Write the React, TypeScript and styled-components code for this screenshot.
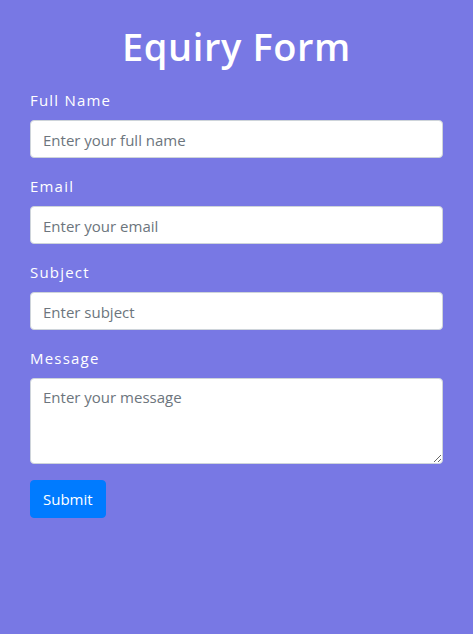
import React from 'react';
import styled, { createGlobalStyle } from 'styled-components';

const GlobalStyle = createGlobalStyle`
  html, body {
    margin: 0;
    padding: 0;
    background: #7878e4;
  }
  body {
    font-family: 'Open Sans', 'Noto Sans', sans-serif;
  }
  * {
    box-sizing: border-box;
  }
`;

const Page = styled.div`
  min-height: 634px;
  background: #7878e4;
  padding: 22px 30px;
`;

const Title = styled.h1`
  margin: 0 0 18px;
  font-size: 38px;
  line-height: 48px;
  font-weight: 600;
  color: #ffffff;
  text-align: center;
  letter-spacing: 0.6px;
`;

const Form = styled.form`
  display: flex;
  flex-direction: column;
  gap: 16px;
`;

const Field = styled.div`
  display: flex;
  flex-direction: column;
  gap: 8px;
`;

const Label = styled.label`
  font-size: 15px;
  line-height: 24px;
  color: #ffffff;
  letter-spacing: 1.2px;
`;

const Input = styled.input`
  height: 38px;
  width: 100%;
  padding: 7px 12px 5px;
  font-family: inherit;
  font-size: 15px;
  color: #495057;
  background: #ffffff;
  border: 1px solid #ced4da;
  border-radius: 4px;
  outline: none;

  &::placeholder {
    color: #6c757d;
  }
`;

const TextArea = styled.textarea`
  height: 86px;
  width: 100%;
  padding: 6px 12px;
  font-family: inherit;
  font-size: 15px;
  line-height: 24px;
  color: #495057;
  background: #ffffff;
  border: 1px solid #ced4da;
  border-radius: 4px;
  outline: none;
  display: block;

  &::placeholder {
    color: #6c757d;
  }
`;

const Submit = styled.button`
  align-self: flex-start;
  height: 38px;
  padding: 0 12px;
  font-family: inherit;
  font-size: 15px;
  color: #ffffff;
  background: #007bff;
  border: 1px solid #007bff;
  border-radius: 4px;
  cursor: pointer;
`;

const fields = [
  { id: 'name', label: 'Full Name', placeholder: 'Enter your full name', type: 'text' },
  { id: 'email', label: 'Email', placeholder: 'Enter your email', type: 'email' },
  { id: 'subject', label: 'Subject', placeholder: 'Enter subject', type: 'text' },
];

function App() {
  return (
    <>
      <GlobalStyle />
      <Page>
        <Title>Equiry Form</Title>
        <Form onSubmit={(e) => e.preventDefault()}>
          {fields.map((f) => (
            <Field key={f.id}>
              <Label htmlFor={f.id}>{f.label}</Label>
              <Input id={f.id} type={f.type} placeholder={f.placeholder} />
            </Field>
          ))}
          <Field>
            <Label htmlFor="message">Message</Label>
            <TextArea id="message" placeholder="Enter your message" />
          </Field>
          <Submit type="submit">Submit</Submit>
        </Form>
      </Page>
    </>
  );
}

export default App;
